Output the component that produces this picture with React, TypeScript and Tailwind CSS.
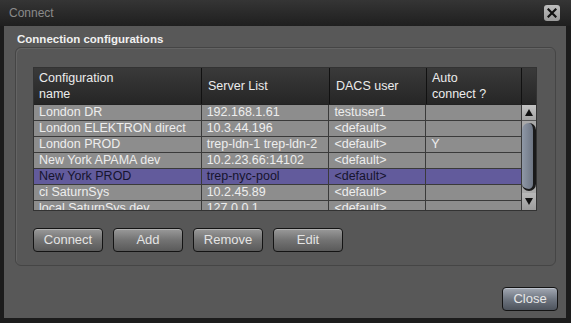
import React from "react";

const rows = [
  ["London DR", "192.168.1.61", "testuser1", ""],
  ["London ELEKTRON direct", "10.3.44.196", "<default>", ""],
  ["London PROD", "trep-ldn-1 trep-ldn-2", "<default>", "Y"],
  ["New York APAMA dev", "10.2.23.66:14102", "<default>", ""],
  ["New York PROD", "trep-nyc-pool", "<default>", ""],
  ["ci SaturnSys", "10.2.45.89", "<default>", ""],
  ["local SaturnSys dev", "127.0.0.1", "<default>", ""],
];

const widths = ["w-[168px]", "w-[128px]", "w-[97px]", "w-[95px]"];

function Btn({ label }: { label: string }) {
  return (
    <div className="w-[70px] h-[24px] rounded-[4px] border border-[#141414] bg-gradient-to-b from-[#9a9a9a] via-[#737373] to-[#5a5a5a] flex items-center justify-center text-[13px] text-[#e4e4e4] shadow-[inset_0_1px_0_#b0b0b0]">
      {label}
    </div>
  );
}

export default function App() {
  return (
    <div
      className="w-[571px] h-[323px] bg-[#1c1c1c] flex flex-col overflow-hidden"
      style={{ fontFamily: '"Liberation Sans", Arial, sans-serif' }}
    >
      {/* Title bar */}
      <div className="h-[26px] shrink-0 bg-gradient-to-b from-[#353535] to-[#1f1f1f] flex items-center justify-between pl-[9px] pr-[11px]">
        <span className="text-[12px] text-[#8a8a8a]">Connect</span>
        <div className="w-[16px] h-[16px] rounded-[3px] bg-gradient-to-b from-[#bdbdbd] to-[#9a9a9a] flex items-center justify-center">
          <svg width="10" height="10" viewBox="0 0 10 10">
            <path d="M1.5 1.5 L8.5 8.5 M8.5 1.5 L1.5 8.5" stroke="#111" strokeWidth="2.2" strokeLinecap="square" />
          </svg>
        </div>
      </div>

      {/* Body */}
      <div className="flex-1 ml-[4px] mr-[5px] mb-[5px] bg-[#585858] flex flex-col">
        <div className="pl-[13px] pt-[6px] h-[21px] text-[11.5px] font-bold text-[#f0f0f0] leading-[14px]">
          Connection configurations
        </div>
        <div className="ml-[11px] mr-[10px] h-[219px] rounded-[6px] border border-[#454545] bg-[#575757] shadow-[inset_1px_1px_0_#646464] pl-[17px] pt-[19px] flex flex-col">
          {/* Table */}
          <div className="w-[504px] h-[144px] border border-[#333] flex flex-col overflow-hidden bg-[#8d8d8d]">
            {/* Header */}
            <div className="h-[37px] shrink-0 flex bg-gradient-to-b from-[#3a3a3a] to-[#262626] border-b border-[#222] text-[12.5px] text-[#ececec] leading-[16px]">
              <div className={`${widths[0]} border-r border-[#111] pl-[5px] flex items-center`}>
                Configuration<br />name
              </div>
              <div className={`${widths[1]} border-r border-[#111] pl-[6px] flex items-center`}>Server List</div>
              <div className={`${widths[2]} border-r border-[#111] pl-[6px] flex items-center`}>DACS user</div>
              <div className={`${widths[3]} border-r border-[#111] pl-[5px] flex items-center`}>
                Auto<br />connect ?
              </div>
              <div className="flex-1" />
            </div>
            <div className="flex flex-1 overflow-hidden">
              <div className="w-[487px] flex flex-col overflow-hidden">
                {rows.map((r, i) => {
                  const sel = i === 4;
                  return (
                    <div
                      key={i}
                      className={`h-[16px] shrink-0 flex border-b border-[#3a3a3a] text-[12.5px] leading-[15px] ${
                        sel ? "bg-[#625b9c] text-[#16142e]" : "bg-[#8d8d8d] text-[#ededed]"
                      }`}
                    >
                      {r.map((c, j) => (
                        <div
                          key={j}
                          className={`${widths[j]} ${j < 3 ? "border-r border-[#3a3a3a]" : ""} pl-[5px] whitespace-nowrap overflow-hidden`}
                        >
                          {c}
                        </div>
                      ))}
                    </div>
                  );
                })}
              </div>
              {/* Scrollbar */}
              <div className="w-[15px] border-l border-[#3a3a3a] bg-[#a9a9a9] flex flex-col">
                <div className="h-[16px] shrink-0 bg-gradient-to-b from-[#c4c4c4] to-[#a4a4a4] border-b border-[#555] flex items-center justify-center">
                  <svg width="8" height="7" viewBox="0 0 8 7">
                    <path d="M4 0 L8 7 L0 7 Z" fill="#111" />
                  </svg>
                </div>
                <div className="flex-1 py-[2px] flex">
                  <div className="flex-1 rounded-[7px] bg-gradient-to-r from-[#8f98a6] to-[#6e7684] border-r-[3px] border-b-[2px] border-[#1a1a1a]" />
                </div>
                <div className="h-[17px] shrink-0 bg-gradient-to-b from-[#b8b8b8] to-[#9c9c9c] flex items-center justify-center">
                  <svg width="8" height="7" viewBox="0 0 8 7">
                    <path d="M0 0 L8 0 L4 7 Z" fill="#111" />
                  </svg>
                </div>
              </div>
            </div>
          </div>
          {/* Buttons */}
          <div className="flex gap-[10px] mt-[17px]">
            <Btn label="Connect" />
            <Btn label="Add" />
            <Btn label="Remove" />
            <Btn label="Edit" />
          </div>
        </div>
        <div className="flex-1 flex items-end justify-end pr-[8px] pb-[7px]">
          <div className="w-[56px] h-[24px] rounded-[4px] border border-[#141414] bg-gradient-to-b from-[#a3a9b3] via-[#6f7681] to-[#4d535c] flex items-center justify-center text-[13px] text-[#e8e8e8] shadow-[inset_0_1px_0_#bcc2cc]">
            Close
          </div>
        </div>
      </div>
    </div>
  );
}
